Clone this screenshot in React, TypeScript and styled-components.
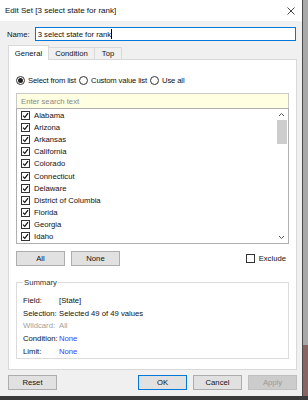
import React from "react";
import styled, { createGlobalStyle } from "styled-components";

const Global = createGlobalStyle`
  html, body { margin: 0; padding: 0; }
  body {
    width: 308px; height: 400px; overflow: hidden;
    font-family: "Liberation Sans", Arial, sans-serif;
    font-size: 7.7px; color: #111;
  }
`;

const Page = styled.div`
  width: 308px;
  height: 400px;
  background:
    linear-gradient(to bottom, transparent 396px, #3a3a3a 396px),
    linear-gradient(to bottom, #a9a9a9 0, #a9a9a9 345px, #8a6363 345px);
  display: flex;
  flex-direction: column;
`;

const Dialog = styled.div`
  width: 303px;
  height: 396px;
  box-sizing: border-box;
  border-right: 1px solid #4a4a4a;
  background: #f0f0f0;
  display: flex;
  flex-direction: column;
`;

const TitleBar = styled.div`
  height: 21px;
  background: #ffffff;
  display: flex;
  align-items: center;
  justify-content: space-between;
  padding: 0 7px 0 5px;
  font-size: 8px;
  color: #111;
`;

const Body = styled.div`
  flex: 1;
  display: flex;
  flex-direction: column;
  padding: 6px 6px 0 7px;
`;

const NameRow = styled.div`
  display: flex;
  align-items: center;
  height: 14px;
  gap: 5px;
`;

const NameInput = styled.div`
  flex: 1;
  height: 14px;
  box-sizing: border-box;
  border: 1px solid #0078d7;
  background: #fff;
  padding-left: 2px;
  display: flex;
  align-items: center;
`;

const Caret = styled.span`
  display: inline-block;
  width: 1px;
  height: 10px;
  background: #000;
`;

const Tabs = styled.div`
  display: flex;
  align-items: flex-end;
  margin-top: 4px;
  padding-left: 1px;
  height: 15px;
`;

const Tab = styled.div<{ $w: number; $active?: boolean }>`
  width: ${(p) => p.$w}px;
  height: ${(p) => (p.$active ? 15 : 13)}px;
  box-sizing: border-box;
  display: flex;
  align-items: center;
  justify-content: center;
  border: 1px solid #d9d9d9;
  border-bottom: ${(p) => (p.$active ? "none" : "1px solid #d9d9d9")};
  background: ${(p) => (p.$active ? "#ffffff" : "#f0f0f0")};
  margin-left: ${(p) => (p.$active ? 0 : -1)}px;
  position: relative;
  z-index: ${(p) => (p.$active ? 1 : 0)};
`;

const Panel = styled.div`
  width: 289px;
  height: 311px;
  box-sizing: border-box;
  margin-left: 1px;
  background: #fff;
  border: 1px solid #d9d9d9;
  margin-top: -1px;
  padding: 14px 7px 0 7px;
  display: flex;
  flex-direction: column;
`;

const RadioRow = styled.div`
  display: flex;
  align-items: center;
  height: 12px;
  letter-spacing: -0.15px;
`;

const RadioItem = styled.label`
  display: flex;
  align-items: center;
  gap: 3px;
  margin-right: 3px;
`;

const RadioCircle = styled.span<{ $on?: boolean }>`
  width: 9px;
  height: 9px;
  box-sizing: border-box;
  border: 1px solid #333;
  border-radius: 50%;
  display: flex;
  align-items: center;
  justify-content: center;
  &::after {
    content: "";
    width: 5px;
    height: 5px;
    border-radius: 50%;
    background: ${(p) => (p.$on ? "#222" : "transparent")};
  }
`;

const Search = styled.div`
  margin-top: 7px;
  height: 15px;
  box-sizing: border-box;
  border: 1px solid #c8c8c8;
  border-bottom: none;
  background: #ffffe1;
  color: #8a8a8a;
  display: flex;
  align-items: center;
  padding-left: 4px;
`;

const List = styled.div`
  height: 136px;
  box-sizing: border-box;
  border: 1px solid #b0b0b0;
  display: flex;
  background: #fff;
`;

const Items = styled.div`
  flex: 1;
  padding: 0 0 0 4px;
  display: flex;
  flex-direction: column;
`;

const Item = styled.div`
  height: 12.2px;
  display: flex;
  align-items: center;
  gap: 4px;
`;

const Check = styled.span`
  width: 9px;
  height: 9px;
  box-sizing: border-box;
  border: 1px solid #333;
  background: #fff;
  display: flex;
  align-items: center;
  justify-content: center;
`;

const Scrollbar = styled.div`
  width: 11px;
  display: flex;
  flex-direction: column;
  align-items: center;
  background: #fff;
  margin-right: 1px;
`;

const Arrow = styled.div`
  height: 11px;
  width: 11px;
  display: flex;
  align-items: center;
  justify-content: center;
`;

const Thumb = styled.div`
  width: 10px;
  height: 24px;
  background: #cdcdcd;
`;

const Spacer = styled.div`
  flex: 1;
`;

const ButtonRow = styled.div`
  display: flex;
  align-items: center;
  margin-top: 7px;
  height: 15px;
  gap: 6px;
`;

const Button = styled.div<{ $w?: number; $primary?: boolean; $disabled?: boolean }>`
  width: ${(p) => p.$w ?? 49}px;
  height: 15px;
  box-sizing: border-box;
  border: 1px solid ${(p) => (p.$primary ? "#0078d7" : p.$disabled ? "#bfbfbf" : "#adadad")};
  background: ${(p) => (p.$disabled ? "#cccccc" : "#e1e1e1")};
  color: ${(p) => (p.$disabled ? "#9a9a9a" : "#111")};
  display: flex;
  align-items: center;
  justify-content: center;
`;

const ExcludeLabel = styled.label`
  display: flex;
  align-items: center;
  gap: 4px;
  margin-right: 3px;
`;

const Group = styled.fieldset`
  margin: 12px 0 0 0;
  padding: 7px 0 0 6px;
  border: 1px solid #dcdcdc;
  height: 81px;
  box-sizing: border-box;
  display: flex;
  flex-direction: column;
`;

const Legend = styled.legend`
  padding: 0 1px;
  color: #333;
`;

const SumRow = styled.div`
  display: grid;
  grid-template-columns: 36px 1fr;
  height: 12.7px;
  align-items: center;
`;

const SumVal = styled.span<{ $tone?: "link" | "muted" }>`
  color: ${(p) => (p.$tone === "link" ? "#3a3aff" : p.$tone === "muted" ? "#a0a0a0" : "#111")};
`;

const SumKey = styled.span<{ $muted?: boolean }>`
  color: ${(p) => (p.$muted ? "#a0a0a0" : "#111")};
`;

const Footer = styled.div`
  display: flex;
  align-items: center;
  height: 15px;
  margin-top: 5px;
  margin-left: 1px;
  width: 289px;
  gap: 6px;
`;

const CheckMark = () => (
  <svg width="7" height="7" viewBox="0 0 7 7">
    <path d="M1 3.6 L2.8 5.4 L6 1.2" fill="none" stroke="#111" strokeWidth="1.2" />
  </svg>
);

const states = [
  "Alabama",
  "Arizona",
  "Arkansas",
  "California",
  "Colorado",
  "Connecticut",
  "Delaware",
  "District of Columbia",
  "Florida",
  "Georgia",
  "Idaho",
];

export default function App() {
  return (
    <>
      <Global />
      <Page>
        <Dialog>
          <TitleBar>
            <span>Edit Set [3 select state for rank]</span>
            <svg width="8" height="8" viewBox="0 0 8 8">
              <path d="M0.5 0.5 L7.5 7.5 M7.5 0.5 L0.5 7.5" stroke="#333" strokeWidth="0.9" />
            </svg>
          </TitleBar>
          <Body>
            <NameRow>
              <span>Name:</span>
              <NameInput>
                3 select state for rank<Caret />
              </NameInput>
            </NameRow>
            <Tabs>
              <Tab $w={41} $active>General</Tab>
              <Tab $w={47}>Condition</Tab>
              <Tab $w={28}>Top</Tab>
            </Tabs>
            <Panel>
              <RadioRow>
                <RadioItem>
                  <RadioCircle $on />
                  Select from list
                </RadioItem>
                <RadioItem>
                  <RadioCircle />
                  Custom value list
                </RadioItem>
                <RadioItem>
                  <RadioCircle />
                  Use all
                </RadioItem>
              </RadioRow>
              <Search>Enter search text</Search>
              <List>
                <Items>
                  {states.map((s) => (
                    <Item key={s}>
                      <Check>
                        <CheckMark />
                      </Check>
                      {s}
                    </Item>
                  ))}
                </Items>
                <Scrollbar>
                  <Arrow>
                    <svg width="7" height="5" viewBox="0 0 7 5">
                      <path d="M1 4 L3.5 1.5 L6 4" fill="none" stroke="#555" strokeWidth="1" />
                    </svg>
                  </Arrow>
                  <Thumb />
                  <Spacer />
                  <Arrow>
                    <svg width="7" height="5" viewBox="0 0 7 5">
                      <path d="M1 1 L3.5 3.5 L6 1" fill="none" stroke="#555" strokeWidth="1" />
                    </svg>
                  </Arrow>
                </Scrollbar>
              </List>
              <ButtonRow>
                <Button $w={49}>All</Button>
                <Button $w={49}>None</Button>
                <Spacer />
                <ExcludeLabel>
                  <Check />
                  Exclude
                </ExcludeLabel>
              </ButtonRow>
              <Group>
                <Legend>Summary</Legend>
                <SumRow>
                  <SumKey>Field:</SumKey>
                  <SumVal>[State]</SumVal>
                </SumRow>
                <SumRow>
                  <SumKey>Selection:</SumKey>
                  <SumVal>Selected 49 of 49 values</SumVal>
                </SumRow>
                <SumRow>
                  <SumKey $muted>Wildcard:</SumKey>
                  <SumVal $tone="muted">All</SumVal>
                </SumRow>
                <SumRow>
                  <SumKey>Condition:</SumKey>
                  <SumVal $tone="link">None</SumVal>
                </SumRow>
                <SumRow>
                  <SumKey>Limit:</SumKey>
                  <SumVal $tone="link">None</SumVal>
                </SumRow>
              </Group>
            </Panel>
            <Footer>
              <Button>Reset</Button>
              <Spacer />
              <Button $primary>OK</Button>
              <Button>Cancel</Button>
              <Button $disabled>Apply</Button>
            </Footer>
          </Body>
        </Dialog>
      </Page>
    </>
  );
}
